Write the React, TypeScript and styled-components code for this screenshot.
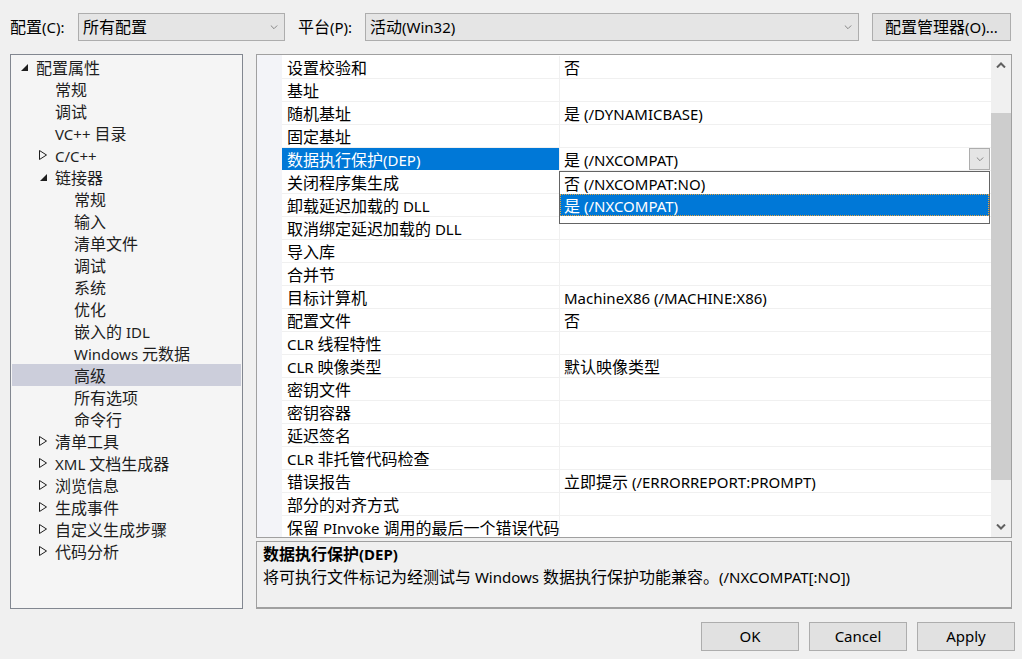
import React from 'react';
import styled, { createGlobalStyle } from 'styled-components';

const GlobalStyle = createGlobalStyle`
  html, body {
    margin: 0;
    padding: 0;
    background: #f0f0f0;
  }
  body {
    font-family: "Noto Sans CJK SC", sans-serif;
    font-size: 16px;
    color: #000;
  }
`;

// Latin runs are set a little smaller than the CJK glyphs, as in the UI font
const Latin = styled.span`
  font-family: "Noto Sans", "Noto Sans CJK SC", sans-serif;
  font-size: 15px;
`;

const mix = (text: string) =>
  text.split(/([\u0000-\u02ff]+)/).map((part, i) =>
    part === '' ? null : /^[\u0000-\u02ff]+$/.test(part) ? <Latin key={i}>{part}</Latin> : part
  );

const Window = styled.div`
  width: 1022px;
  height: 659px;
  background: #f0f0f0;
  display: flex;
  flex-direction: column;
  overflow: hidden;
`;

const TopBar = styled.div`
  display: flex;
  align-items: center;
  height: 28px;
  margin: 13px 11px 0 10px;
`;

const FieldLabel = styled.span<{ $width: number; $gap?: number }>`
  width: ${p => p.$width}px;
  margin-left: ${p => p.$gap || 0}px;
  flex-shrink: 0;
  white-space: nowrap;
  padding-bottom: 2px;
`;

const Combo = styled.div<{ $width?: number }>`
  box-sizing: border-box;
  height: 28px;
  ${p => (p.$width ? `width: ${p.$width}px; flex-shrink: 0;` : 'flex: 1;')}
  border: 1px solid #adadad;
  background: #e5e5e5;
  display: flex;
  align-items: center;
  padding: 0 6px 0 4px;
`;

const ComboText = styled.span`
  flex: 1;
  white-space: nowrap;
  padding-bottom: 2px;
`;

const PushButton = styled.button<{ $width: number; $gap?: number }>`
  box-sizing: border-box;
  width: ${p => p.$width}px;
  height: ${p => (p.$gap ? 28 : 29)}px;
  margin-left: ${p => p.$gap || 0}px;
  flex-shrink: 0;
  border: 1px solid #adadad;
  background: #e1e1e1;
  font: inherit;
  color: #000;
  padding: 0 0 3px;
`;

const Main = styled.div`
  display: flex;
  height: 555px;
  margin: 13px 10px 0 10px;
  gap: 13px;
`;

const TreePanel = styled.div`
  box-sizing: border-box;
  width: 233px;
  height: 555px;
  border: 1px solid #828790;
  background: #f5f5f5;
  padding: 1px;
`;

const TreeRow = styled.div<{ $level: number; $selected?: boolean }>`
  height: 22px;
  display: flex;
  align-items: center;
  padding-left: ${p => 8 + p.$level * 19}px;
  background: ${p => (p.$selected ? '#cccedb' : 'transparent')};
  color: #1e1e1e;
  white-space: nowrap;
`;

const ArrowSlot = styled.span`
  width: 16px;
  height: 22px;
  flex-shrink: 0;
  display: flex;
  align-items: center;
`;

const TreeLabel = styled.span`
  line-height: 22px;
`;

const RightColumn = styled.div`
  width: 756px;
  display: flex;
  flex-direction: column;
  gap: 3px;
`;

const Grid = styled.div`
  box-sizing: border-box;
  height: 484px;
  border: 1px solid #a0a0a0;
  background: #fff;
  display: flex;
  overflow: hidden;
`;

const GutterStrip = styled.div`
  width: 25px;
  flex-shrink: 0;
  background: #f3f4f8;
`;

const Rows = styled.div`
  width: 709px;
  padding-top: 1px;
`;

const PropRow = styled.div`
  display: flex;
  height: 23px;
`;

const NameCell = styled.div<{ $selected?: boolean }>`
  box-sizing: border-box;
  width: 278px;
  height: 23px;
  padding-left: 5px;
  line-height: 22px;
  border-bottom: 1px solid ${p => (p.$selected ? '#fff' : '#f0f0f0')};
  border-right: 1px solid #f0f0f0;
  background: ${p => (p.$selected ? '#0078d7' : 'transparent')};
  color: ${p => (p.$selected ? '#fff' : '#000')};
  white-space: nowrap;
`;

const ValueCell = styled.div`
  position: relative;
  box-sizing: border-box;
  flex: 1;
  height: 23px;
  padding-left: 4px;
  border-bottom: 1px solid #f0f0f0;
  display: flex;
  align-items: flex-start;
  line-height: 22px;
  white-space: nowrap;
`;

const CellText = styled.span`
  flex: 1;
`;

const DropButton = styled.div`
  box-sizing: border-box;
  width: 21px;
  height: 22px;
  margin-right: 1px;
  border: 1px solid #adadad;
  background: #e5e5e5;
  display: flex;
  align-items: center;
  justify-content: center;
`;

const DropList = styled.div`
  position: absolute;
  left: -1px;
  top: 23px;
  box-sizing: border-box;
  width: 431px;
  height: 53px;
  border: 1px solid #646464;
  background: #fff;
  z-index: 2;
`;

const DropItem = styled.div<{ $selected?: boolean }>`
  box-sizing: border-box;
  height: 22px;
  line-height: 20px;
  padding-left: 3px;
  background: ${p => (p.$selected ? '#0078d7' : '#fff')};
  color: ${p => (p.$selected ? '#fff' : '#000')};
  border: 1px ${p => (p.$selected ? 'dotted #e8a33c' : 'solid transparent')};
`;

const ScrollBar = styled.div`
  width: 20px;
  flex-shrink: 0;
  background: #f0f0f0;
  display: flex;
  flex-direction: column;
`;

const ScrollArrow = styled.div`
  height: 20px;
  display: flex;
  align-items: center;
  justify-content: center;
  flex-shrink: 0;
`;

const ScrollTrack = styled.div`
  flex: 1;
`;

const Thumb = styled.div<{ $top: number; $size: number }>`
  margin-top: ${p => p.$top}px;
  height: ${p => p.$size}px;
  background: #cdcdcd;
`;

const Description = styled.div`
  box-sizing: border-box;
  height: 68px;
  border: 1px solid #a0a0a0;
  border-bottom-width: 2px;
  padding: 0 6px;
  line-height: 22px;
`;

const DescTitle = styled.div`
  font-weight: bold;
`;

const Footer = styled.div`
  display: flex;
  justify-content: flex-end;
  gap: 10px;
  margin: 13px 7px 0 0;
`;

const Chevron = ({ up, dark }: { up?: boolean; dark?: boolean }) => (
  <svg width={dark ? 10 : 8} height={dark ? 6 : 5} viewBox="0 0 10 6">
    <path
      d={up ? 'M1 5.5 L5 1.5 L9 5.5' : 'M1 0.5 L5 4.5 L9 0.5'}
      fill="none"
      stroke={dark ? '#606060' : '#707070'}
      strokeWidth={dark ? 2 : 1}
    />
  </svg>
);

const Expander = ({ open }: { open: boolean }) =>
  open ? (
    <svg width="9" height="9" viewBox="0 0 9 9">
      <path d="M8 1 L8 8 L1 8 Z" fill="#1e1e1e" />
    </svg>
  ) : (
    <svg width="9" height="10" viewBox="0 0 9 10">
      <path d="M0.5 0.5 L7.5 5 L0.5 9.5 Z" fill="none" stroke="#1e1e1e" strokeWidth="1" />
    </svg>
  );

type TreeItem = { label: string; level: number; open?: boolean; selected?: boolean };

const treeItems: TreeItem[] = [
  { label: '配置属性', level: 0, open: true },
  { label: '常规', level: 1 },
  { label: '调试', level: 1 },
  { label: 'VC++ 目录', level: 1 },
  { label: 'C/C++', level: 1, open: false },
  { label: '链接器', level: 1, open: true },
  { label: '常规', level: 2 },
  { label: '输入', level: 2 },
  { label: '清单文件', level: 2 },
  { label: '调试', level: 2 },
  { label: '系统', level: 2 },
  { label: '优化', level: 2 },
  { label: '嵌入的 IDL', level: 2 },
  { label: 'Windows 元数据', level: 2 },
  { label: '高级', level: 2, selected: true },
  { label: '所有选项', level: 2 },
  { label: '命令行', level: 2 },
  { label: '清单工具', level: 1, open: false },
  { label: 'XML 文档生成器', level: 1, open: false },
  { label: '浏览信息', level: 1, open: false },
  { label: '生成事件', level: 1, open: false },
  { label: '自定义生成步骤', level: 1, open: false },
  { label: '代码分析', level: 1, open: false },
];

const props: [string, string][] = [
  ['设置校验和', '否'],
  ['基址', ''],
  ['随机基址', '是 (/DYNAMICBASE)'],
  ['固定基址', ''],
  ['数据执行保护(DEP)', '是 (/NXCOMPAT)'],
  ['关闭程序集生成', ''],
  ['卸载延迟加载的 DLL', ''],
  ['取消绑定延迟加载的 DLL', ''],
  ['导入库', ''],
  ['合并节', ''],
  ['目标计算机', 'MachineX86 (/MACHINE:X86)'],
  ['配置文件', '否'],
  ['CLR 线程特性', ''],
  ['CLR 映像类型', '默认映像类型'],
  ['密钥文件', ''],
  ['密钥容器', ''],
  ['延迟签名', ''],
  ['CLR 非托管代码检查', ''],
  ['错误报告', '立即提示 (/ERRORREPORT:PROMPT)'],
  ['部分的对齐方式', ''],
  ['保留 PInvoke 调用的最后一个错误代码', ''],
];

const SELECTED = 4;

export default function App() {
  return (
    <>
      <GlobalStyle />
      <Window>
        <TopBar>
          <FieldLabel $width={68}>{mix('配置(C):')}</FieldLabel>
          <Combo $width={207}>
            <ComboText>所有配置</ComboText>
            <Chevron />
          </Combo>
          <FieldLabel $width={67} $gap={13}>{mix('平台(P):')}</FieldLabel>
          <Combo>
            <ComboText>{mix('活动(Win32)')}</ComboText>
            <Chevron />
          </Combo>
          <PushButton $width={139} $gap={13}>{mix('配置管理器(O)...')}</PushButton>
        </TopBar>

        <Main>
          <TreePanel>
            {treeItems.map((item, i) => (
              <TreeRow key={i} $level={item.level} $selected={item.selected}>
                <ArrowSlot>{item.open !== undefined && <Expander open={item.open} />}</ArrowSlot>
                <TreeLabel>{mix(item.label)}</TreeLabel>
              </TreeRow>
            ))}
          </TreePanel>

          <RightColumn>
            <Grid>
              <GutterStrip />
              <Rows>
                {props.map(([name, value], i) => (
                  <PropRow key={i}>
                    <NameCell $selected={i === SELECTED}>{mix(name)}</NameCell>
                    {i === SELECTED ? (
                      <ValueCell>
                        <CellText>{mix(value)}</CellText>
                        <DropButton>
                          <Chevron />
                        </DropButton>
                        <DropList>
                          <DropItem>{mix('否 (/NXCOMPAT:NO)')}</DropItem>
                          <DropItem $selected>{mix('是 (/NXCOMPAT)')}</DropItem>
                        </DropList>
                      </ValueCell>
                    ) : (
                      <ValueCell>
                        <CellText>{mix(value)}</CellText>
                      </ValueCell>
                    )}
                  </PropRow>
                ))}
              </Rows>
              <ScrollBar>
                <ScrollArrow>
                  <Chevron up dark />
                </ScrollArrow>
                <ScrollTrack>
                  <Thumb $top={38} $size={367} />
                </ScrollTrack>
                <ScrollArrow>
                  <Chevron dark />
                </ScrollArrow>
              </ScrollBar>
            </Grid>
            <Description>
              <DescTitle>{mix('数据执行保护(DEP)')}</DescTitle>
              <div>{mix('将可执行文件标记为经测试与 Windows 数据执行保护功能兼容。(/NXCOMPAT[:NO])')}</div>
            </Description>
          </RightColumn>
        </Main>

        <Footer>
          <PushButton $width={98}>{mix('OK')}</PushButton>
          <PushButton $width={98}>{mix('Cancel')}</PushButton>
          <PushButton $width={98}>{mix('Apply')}</PushButton>
        </Footer>
      </Window>
    </>
  );
}
